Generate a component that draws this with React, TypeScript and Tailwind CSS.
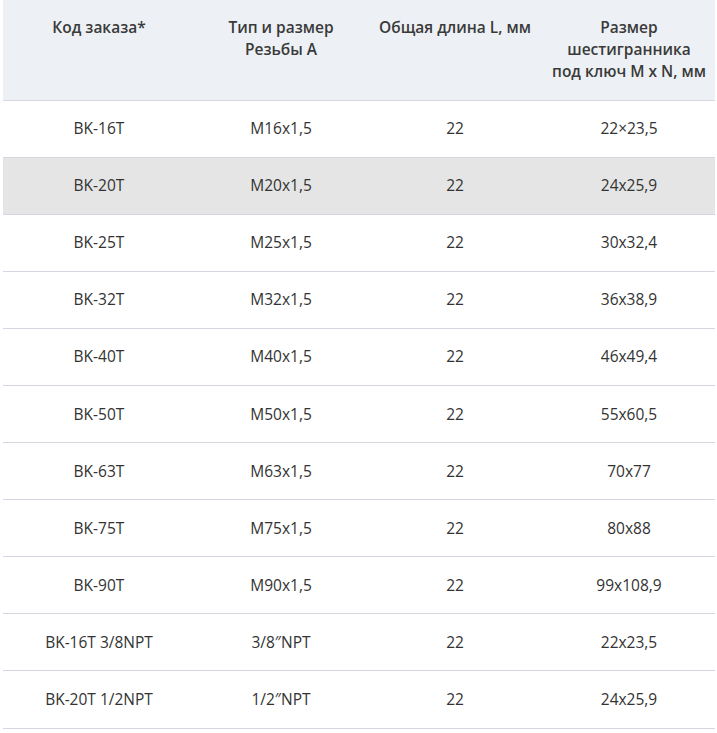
const head = ["Код заказа*", "Тип и размер\nРезьбы А", "Общая длина L, мм", "Размер\nшестигранника\nпод ключ M x N, мм"];

const rows = [
  ["BK-16T", "M16x1,5", "22", "22×23,5"],
  ["BK-20T", "M20x1,5", "22", "24x25,9"],
  ["BK-25T", "M25x1,5", "22", "30x32,4"],
  ["BK-32T", "M32x1,5", "22", "36x38,9"],
  ["BK-40T", "M40x1,5", "22", "46x49,4"],
  ["BK-50T", "M50x1,5", "22", "55x60,5"],
  ["BK-63T", "M63x1,5", "22", "70x77"],
  ["BK-75T", "M75x1,5", "22", "80x88"],
  ["BK-90T", "M90x1,5", "22", "99x108,9"],
  ["BK-16T 3/8NPT", "3/8″NPT", "22", "22x23,5"],
  ["BK-20T 1/2NPT", "1/2″NPT", "22", "24x25,9"],
];

const widths = ["w-[192px]", "w-[172px]", "w-[176px]", "w-[172px]"];

export default function App() {
  return (
    <div className="bg-white px-[3px] text-[15.5px] text-[#333]" style={{ fontFamily: "'Open Sans', sans-serif" }}>
      <table className="w-[712px] border-collapse">
        <thead>
          <tr className="h-[100px] bg-[#edf1f5] border-b border-[#d6d6e0]">
            {head.map((h, i) => (
              <th
                key={i}
                className={`${widths[i]} align-top whitespace-pre-line pt-[16px] px-1 font-semibold text-[#3a3a3a] leading-[22px] text-center`}
              >
                {h}
              </th>
            ))}
          </tr>
        </thead>
        <tbody>
          {rows.map((r, i) => (
            <tr key={i} className={`h-[57.1px] border-b border-[#d6d6e0] ${i === 1 ? "bg-[#e5e5e5]" : "bg-white"}`}>
              {r.map((c, j) => (
                <td key={j} className="text-center align-middle px-2 leading-[21px]">
                  {c}
                </td>
              ))}
            </tr>
          ))}
        </tbody>
      </table>
    </div>
  );
}
